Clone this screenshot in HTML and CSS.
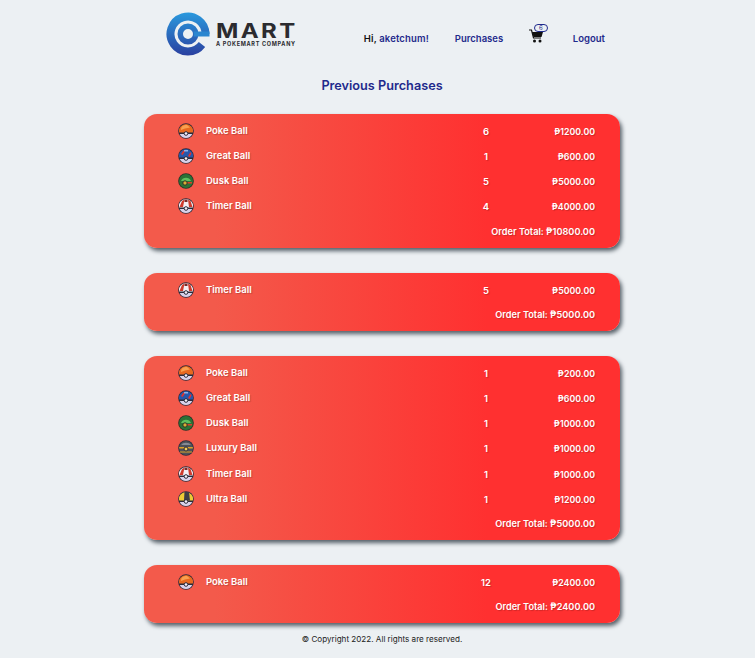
FILE: index.html
```html
<!DOCTYPE html>
<html lang="en">
<head>
  <meta charset="UTF-8" />
  <title>Previous Purchases - E-Mart</title>
  <link rel="stylesheet" href="styles.css">
</head>
<body>

  <svg class="sprites" width="0" height="0">
    <defs>
      <linearGradient id="logoBlue" gradientUnits="userSpaceOnUse" x1="0" y1="0" x2="0" y2="44">
        <stop offset="0" stop-color="#2a9ade" />
        <stop offset="1" stop-color="#2a3f9f" />
      </linearGradient>
      <symbol id="base" viewBox="0 0 16 16">
        <circle cx="8" cy="8" r="7.800" fill="#2b2b3a" />
        <path d="M1.7 11h12.600A7 7 0 0 1 1.700 11z" fill="#d9d2ea" />
      </symbol>
      <symbol id="poke" viewBox="0 0 16 16">
        <use href="#base" />
        <path d="M1.160 9.500A7 7 0 1 1 14.840 9.500z" fill="#e8691f" />
        <path d="M3 7a5 4.500 0 0 1 6-5l3 2.500-5 1z" fill="#f9a04f" />
        <circle cx="8" cy="10.500" r="1.800" fill="#f5f1fa" stroke="#2b2b3a" />
      </symbol>
      <symbol id="great" viewBox="0 0 16 16">
        <use href="#base" />
        <path d="M1.160 9.500A7 7 0 1 1 14.840 9.500z" fill="#2657ad" />
        <path d="M3 6l2.500-3.500 1.500 1-2.500 3.500zM10 8l2.500-4 1 1.500-2 3.500z" fill="#e0342c" />
        <path d="M6 2h4v1.500H6z" fill="#8fb2e6" />
        <circle cx="8" cy="10.500" r="1.800" fill="#f5f1fa" stroke="#2b2b3a" />
      </symbol>
      <symbol id="dusk" viewBox="0 0 16 16">
        <circle cx="8" cy="8" r="7.800" fill="#263226" />
        <circle cx="8" cy="8" r="7" fill="#2b7236" />
        <path d="M3 8a5.500 5.500 0 0 1 10 0z" fill="#5fc05e" />
        <path d="M6 9h8v1.500H6z" fill="#d8402a" />
        <circle cx="7" cy="10" r="2.200" fill="#d9ae36" stroke="#263226" />
      </symbol>
      <symbol id="luxury" viewBox="0 0 16 16">
        <circle cx="8" cy="8" r="7.800" fill="#2b2b3a" />
        <circle cx="8" cy="8" r="7" fill="#4d5159" />
        <path d="M3 5a5.500 4 0 0 1 10 0z" fill="#858a94" />
        <path d="M1.200 7h13.600v1.500H1.200zM2 11.500h12v1H2z" fill="#dc9f28" />
        <circle cx="8" cy="9" r="2" fill="#f2cf5a" stroke="#2b2b3a" />
      </symbol>
      <symbol id="timer" viewBox="0 0 16 16">
        <use href="#base" />
        <path d="M1.160 9.500A7 7 0 1 1 14.840 9.500z" fill="#f3eef4" />
        <path d="M1.500 9l2.500-6 2.500-1.500L5 9zM10 1.500l2.500 1.500L14.500 9H11z" fill="#cf3a2c" />
        <path d="M6.500 1.500h3V4h-3z" fill="#7a2a28" />
        <circle cx="8" cy="10.500" r="1.800" fill="#f5f1fa" stroke="#2b2b3a" />
      </symbol>
      <symbol id="ultra" viewBox="0 0 16 16">
        <use href="#base" />
        <path d="M1.160 9.500A7 7 0 1 1 14.840 9.500z" fill="#eecb35" />
        <path d="M6 9.500l.5-8.500h4.500l1 8.500z" fill="#3d3e46" />
        <circle cx="8" cy="10.500" r="1.800" fill="#f5f1fa" stroke="#2b2b3a" />
      </symbol>
    </defs>
  </svg>

  <header class="topbar">
    <a class="logo" href="#">
      <svg class="logo-mark" width="44" height="44" viewBox="0 0 44 44">
        <path d="M39.500 22A17.500 17.500 0 1 0 36 32.500" fill="none" stroke="url(#logoBlue)" stroke-width="8" />
        <circle cx="22" cy="22" r="7.750" fill="none" stroke="url(#logoBlue)" stroke-width="5.500" />
        <path d="M28 19.500h15.500v5H28z" fill="#2a86d0" />
      </svg>
      <span class="logo-text">
        <span class="logo-name">MART</span>
        <span class="logo-tag">A POKEMART COMPANY</span>
      </span>
    </a>
    <nav class="nav">
      <span class="nav-hi">Hi, <a href="#">aketchum!</a></span>
      <a class="nav-purchases" href="#">Purchases</a>
      <a class="cart" href="#">
        <svg width="15" height="14" viewBox="0 0 15 14">
          <path d="M0 1h2.500l2 8h7.500" fill="none" stroke="#111" stroke-width="1.200" />
          <path d="M3 3h11l-1.500 5H4.500z" fill="#111" />
          <circle cx="5.500" cy="12" r="1.500" fill="#111" />
          <circle cx="11" cy="12" r="1.500" fill="#111" />
        </svg>
        <span class="cart-count">6</span>
      </a>
      <a class="nav-logout" href="#">Logout</a>
    </nav>
  </header>

  <main class="page">
    <h1>Previous Purchases</h1>

    <section class="order">
      <div class="row"><svg class="ball"><use href="#poke" /></svg><span class="name">Poke Ball</span><span class="qty">6</span><span class="price">₱1200.00</span></div>
      <div class="row"><svg class="ball"><use href="#great" /></svg><span class="name">Great Ball</span><span class="qty">1</span><span class="price">₱600.00</span></div>
      <div class="row"><svg class="ball"><use href="#dusk" /></svg><span class="name">Dusk Ball</span><span class="qty">5</span><span class="price">₱5000.00</span></div>
      <div class="row"><svg class="ball"><use href="#timer" /></svg><span class="name">Timer Ball</span><span class="qty">4</span><span class="price">₱4000.00</span></div>
      <div class="total">Order Total: ₱10800.00</div>
    </section>

    <section class="order">
      <div class="row"><svg class="ball"><use href="#timer" /></svg><span class="name">Timer Ball</span><span class="qty">5</span><span class="price">₱5000.00</span></div>
      <div class="total">Order Total: ₱5000.00</div>
    </section>

    <section class="order">
      <div class="row"><svg class="ball"><use href="#poke" /></svg><span class="name">Poke Ball</span><span class="qty">1</span><span class="price">₱200.00</span></div>
      <div class="row"><svg class="ball"><use href="#great" /></svg><span class="name">Great Ball</span><span class="qty">1</span><span class="price">₱600.00</span></div>
      <div class="row"><svg class="ball"><use href="#dusk" /></svg><span class="name">Dusk Ball</span><span class="qty">1</span><span class="price">₱1000.00</span></div>
      <div class="row"><svg class="ball"><use href="#luxury" /></svg><span class="name">Luxury Ball</span><span class="qty">1</span><span class="price">₱1000.00</span></div>
      <div class="row"><svg class="ball"><use href="#timer" /></svg><span class="name">Timer Ball</span><span class="qty">1</span><span class="price">₱1000.00</span></div>
      <div class="row"><svg class="ball"><use href="#ultra" /></svg><span class="name">Ultra Ball</span><span class="qty">1</span><span class="price">₱1200.00</span></div>
      <div class="total">Order Total: ₱5000.00</div>
    </section>

    <section class="order">
      <div class="row"><svg class="ball"><use href="#poke" /></svg><span class="name">Poke Ball</span><span class="qty">12</span><span class="price">₱2400.00</span></div>
      <div class="total">Order Total: ₱2400.00</div>
    </section>

    <footer class="footer">© Copyright 2022. All rights are reserved.</footer>
  </main>

</body>
</html>
```

FILE: styles.css
```css
body {
  margin: 0;
  background: #ecf0f3;
  font-family: Inter, "Open Sans", sans-serif;
}
a {
  color: #1f2a8c;
  text-decoration: none;
}
.sprites {
  display: block;
  height: 0;
}
.topbar {
  display: flex;
  align-items: center;
  height: 68px;
  padding-left: 166px;
}
.logo {
  display: flex;
  align-items: center;
  gap: 6px;
}
.logo-mark {
  display: block;
}
.logo-text {
  display: flex;
  flex-direction: column;
  padding-top: 2px;
  color: #2b2b2f;
}
.logo-name {
  font-size: 20px;
  line-height: 18px;
  font-weight: 700;
  letter-spacing: 2px;
  transform: scaleX(1.2);
  transform-origin: left;
}
.logo-tag {
  font-size: 5.500px;
  line-height: 8px;
  font-weight: 700;
  letter-spacing: 0.700px;
  white-space: nowrap;
}
.nav {
  display: flex;
  align-items: center;
  margin: 8px 0 0 68px;
  font-size: 9.500px;
  font-weight: 600;
}
.nav-hi {
  width: 91px;
  color: #111;
  letter-spacing: 0.150px;
}
.nav-purchases {
  width: 74px;
}
.cart {
  position: relative;
  display: block;
  width: 44px;
  height: 14px;
  margin-top: -4px;
}
.cart-count {
  position: absolute;
  left: 5px;
  top: -5px;
  width: 12px;
  height: 6px;
  border: 1px solid #1f2a8c;
  border-radius: 5px;
  background: #ecf0f3;
  color: #1f2a8c;
  font-size: 6px;
  line-height: 6px;
  font-weight: 400;
  text-align: center;
}
.page {
  width: 476px;
  margin-left: 144px;
}
h1 {
  margin: 9px 0 19px;
  color: #1f2a8c;
  font-size: 12.700px;
  line-height: 18px;
  font-weight: 600;
  text-align: center;
}
.order {
  margin-bottom: 25px;
  padding: 4px 25px 4px 34px;
  border-radius: 13px;
  background: linear-gradient(to right, #f35a4b 15%, #ff3030 72%);
  box-shadow: 2px 3px 4px #566068;
  color: #fff;
  font-size: 9.500px;
  font-weight: 600;
  text-shadow: 1px 1px 1px rgba(0,0,0,0.2);
}
.row {
  display: grid;
  grid-template-columns: 16px 1fr 20px 87px;
  column-gap: 12px;
  align-items: center;
  height: 25.150px;
}
.ball {
  width: 16px;
  height: 16px;
  margin-top: 1px;
}
.qty {
  margin-top: 2px;
  text-align: center;
}
.price {
  margin-top: 2px;
  font-size: 8.800px;
  text-align: right;
}
.total {
  height: 25.150px;
  line-height: 25px;
  font-size: 9.200px;
  text-align: right;
}
.footer {
  margin-top: -16px;
  color: #222;
  font-size: 8.100px;
  line-height: 14px;
  text-align: center;
}
```
